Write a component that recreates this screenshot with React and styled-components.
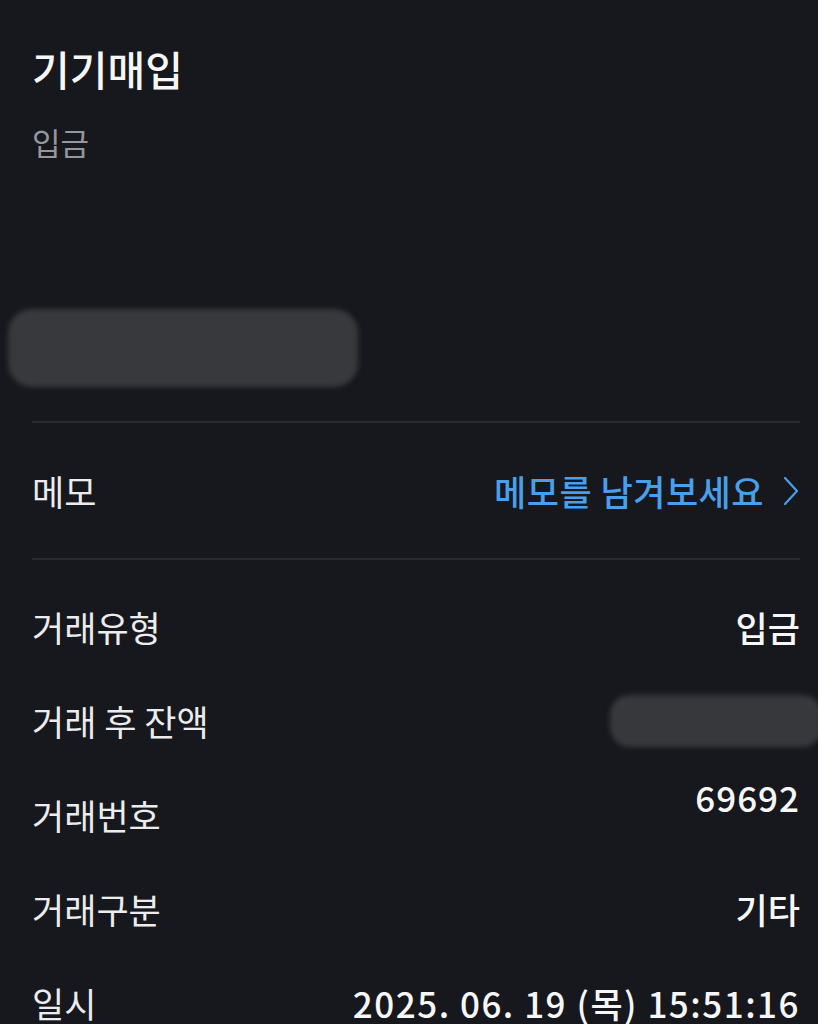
import React from 'react';
import styled, { createGlobalStyle } from 'styled-components';

const GlobalStyle = createGlobalStyle`
  html, body {
    margin: 0;
    padding: 0;
    background: #17181d;
  }
  body {
    font-family: "Noto Sans CJK KR", "Noto Sans", sans-serif;
    color: #ececee;
  }
`;

const rows = [
  { label: '거래유형', value: '입금' },
  { label: '거래 후 잔액', hidden: true },
  { label: '거래번호', value: '69692', raised: true, spacing: 1 },
  { label: '거래구분', value: '기타' },
  { label: '일시', value: '2025. 06. 19 (목) 15:51:16', spacing: 1.5 },
];

export default function App() {
  return (
    <>
      <GlobalStyle />
      <Page>
        <Header>
          <Title>기기매입</Title>
          <Subtitle>입금</Subtitle>
          <AmountMask />
        </Header>
        <Divider />
        <MemoRow>
          <Label>메모</Label>
          <MemoLink>
            메모를 남겨보세요
            <svg width="18" height="32" viewBox="0 0 18 32" fill="none">
              <path d="M3 3 L15 16 L3 29" stroke="#4a9fe8" strokeWidth="2.2" strokeLinecap="round" strokeLinejoin="round" />
            </svg>
          </MemoLink>
        </MemoRow>
        <Divider />
        <DetailList>
          {rows.map(row => (
            <DetailRow key={row.label}>
              <Label>{row.label}</Label>
              {row.hidden
                ? <BalanceMask />
                : <Value $raised={row.raised} $spacing={row.spacing}>{row.value}</Value>}
            </DetailRow>
          ))}
        </DetailList>
      </Page>
    </>
  );
}

const Page = styled.div`
  width: 818px;
  height: 1024px;
  overflow: hidden;
  padding: 0 18px 0 32px;
  box-sizing: border-box;
`;

const Header = styled.div`
  display: flex;
  flex-direction: column;
  padding-top: 42px;
  padding-bottom: 34px;
`;

const Title = styled.div`
  font-size: 41px;
  line-height: 52px;
  font-weight: 500;
  color: #f7f7f8;
`;

const Subtitle = styled.div`
  margin-top: 27px;
  font-size: 31px;
  line-height: 42px;
  color: #96969b;
`;

const AmountMask = styled.div`
  margin-top: 146px;
  margin-left: -24px;
  width: 350px;
  height: 78px;
  border-radius: 24px;
  background: #38393c;
  filter: blur(2.5px);
`;

const Divider = styled.div`
  height: 2px;
  background: #2a2b30;
`;

const MemoRow = styled.div`
  display: flex;
  align-items: center;
  justify-content: space-between;
  height: 135px;
`;

const Label = styled.div`
  font-size: 35px;
  line-height: 46px;
  color: #ececee;
`;

const MemoLink = styled.div`
  display: flex;
  align-items: center;
  gap: 18px;
  font-size: 35px;
  line-height: 46px;
  font-weight: 500;
  color: #4a9fe8;
  letter-spacing: 0.5px;
`;

const DetailList = styled.div`
  display: flex;
  flex-direction: column;
  padding-top: 20px;
`;

const DetailRow = styled.div`
  display: flex;
  align-items: center;
  justify-content: space-between;
  height: 94px;
`;

const Value = styled.div`
  font-size: 35px;
  line-height: 46px;
  font-weight: 500;
  color: #f7f7f8;
  letter-spacing: ${props => props.$spacing || 0}px;
  align-self: ${props => props.$raised ? 'flex-start' : 'center'};
  margin-top: ${props => props.$raised ? '6px' : '0'};
`;

const BalanceMask = styled.div`
  width: 212px;
  height: 52px;
  margin-right: -22px;
  border-radius: 20px;
  background: #37383b;
  filter: blur(2.5px);
`;
